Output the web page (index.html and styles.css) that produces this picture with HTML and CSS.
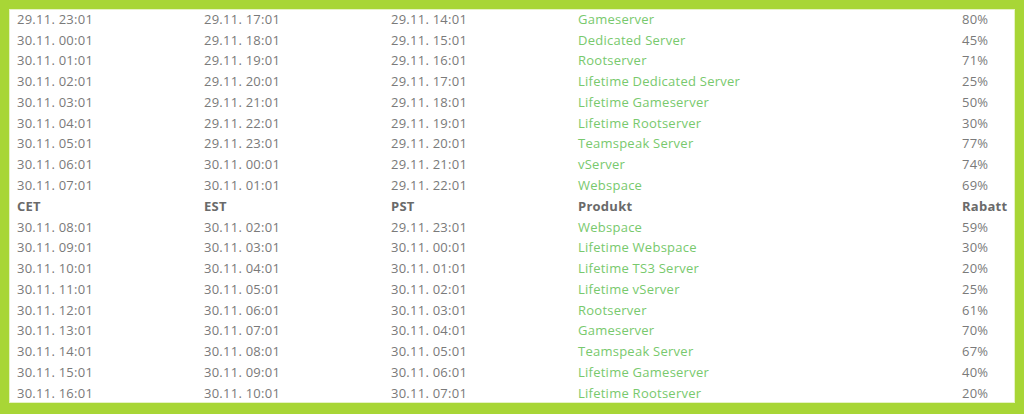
FILE: index.html
```html
<!DOCTYPE html>
<html lang="de">
<head>
<meta charset="utf-8">
<link rel="stylesheet" href="styles.css">
</head>
<body>
<div class="frame">
<table class="deals">
<tbody>
<tr><td>29.11. 23:01</td><td>29.11. 17:01</td><td>29.11. 14:01</td><td class="prod">Gameserver</td><td>80%</td></tr>
<tr><td>30.11. 00:01</td><td>29.11. 18:01</td><td>29.11. 15:01</td><td class="prod">Dedicated Server</td><td>45%</td></tr>
<tr><td>30.11. 01:01</td><td>29.11. 19:01</td><td>29.11. 16:01</td><td class="prod">Rootserver</td><td>71%</td></tr>
<tr><td>30.11. 02:01</td><td>29.11. 20:01</td><td>29.11. 17:01</td><td class="prod">Lifetime Dedicated Server</td><td>25%</td></tr>
<tr><td>30.11. 03:01</td><td>29.11. 21:01</td><td>29.11. 18:01</td><td class="prod">Lifetime Gameserver</td><td>50%</td></tr>
<tr><td>30.11. 04:01</td><td>29.11. 22:01</td><td>29.11. 19:01</td><td class="prod">Lifetime Rootserver</td><td>30%</td></tr>
<tr><td>30.11. 05:01</td><td>29.11. 23:01</td><td>29.11. 20:01</td><td class="prod">Teamspeak Server</td><td>77%</td></tr>
<tr><td>30.11. 06:01</td><td>30.11. 00:01</td><td>29.11. 21:01</td><td class="prod">vServer</td><td>74%</td></tr>
<tr><td>30.11. 07:01</td><td>30.11. 01:01</td><td>29.11. 22:01</td><td class="prod">Webspace</td><td>69%</td></tr>
<tr class="head"><th>CET</th><th>EST</th><th>PST</th><th>Produkt</th><th>Rabatt</th></tr>
<tr><td>30.11. 08:01</td><td>30.11. 02:01</td><td>29.11. 23:01</td><td class="prod">Webspace</td><td>59%</td></tr>
<tr><td>30.11. 09:01</td><td>30.11. 03:01</td><td>30.11. 00:01</td><td class="prod">Lifetime Webspace</td><td>30%</td></tr>
<tr><td>30.11. 10:01</td><td>30.11. 04:01</td><td>30.11. 01:01</td><td class="prod">Lifetime TS3 Server</td><td>20%</td></tr>
<tr><td>30.11. 11:01</td><td>30.11. 05:01</td><td>30.11. 02:01</td><td class="prod">Lifetime vServer</td><td>25%</td></tr>
<tr><td>30.11. 12:01</td><td>30.11. 06:01</td><td>30.11. 03:01</td><td class="prod">Rootserver</td><td>61%</td></tr>
<tr><td>30.11. 13:01</td><td>30.11. 07:01</td><td>30.11. 04:01</td><td class="prod">Gameserver</td><td>70%</td></tr>
<tr><td>30.11. 14:01</td><td>30.11. 08:01</td><td>30.11. 05:01</td><td class="prod">Teamspeak Server</td><td>67%</td></tr>
<tr><td>30.11. 15:01</td><td>30.11. 09:01</td><td>30.11. 06:01</td><td class="prod">Lifetime Gameserver</td><td>40%</td></tr>
<tr><td>30.11. 16:01</td><td>30.11. 10:01</td><td>30.11. 07:01</td><td class="prod">Lifetime Rootserver</td><td>20%</td></tr>
</tbody>
</table>
</div>
</body>
</html>
```
FILE: styles.css
```css
html, body {
  margin: 0;
  padding: 0;
  background: #a8d636;
}
.frame {
  margin: 9px 9px 11px 9px;
  background: #ffffff;
  border: 1px solid #e6f3c4;
  height: 394px;
  box-sizing: border-box;
  overflow: hidden;
}
.deals {
  width: 100%;
  border-collapse: collapse;
  table-layout: fixed;
  font-family: "Open Sans", "DejaVu Sans", sans-serif;
  font-size: 13px;
  letter-spacing: 0.25px;
  color: #7a7a7a;
}
.deals td, .deals th {
  height: 20.78px;
  padding: 0 0 2px 7px;
  box-sizing: border-box;
  text-align: left;
  white-space: nowrap;
  vertical-align: middle;
  line-height: 1;
}
.deals td:nth-child(1), .deals th:nth-child(1),
.deals td:nth-child(2), .deals th:nth-child(2),
.deals td:nth-child(3), .deals th:nth-child(3) { width: 187px; }
.deals td:nth-child(5), .deals th:nth-child(5) { width: 59px; }
.deals .prod { color: #78c96d; }
.deals .head th {
  font-weight: bold;
  color: #6a6a6a;
}
```
